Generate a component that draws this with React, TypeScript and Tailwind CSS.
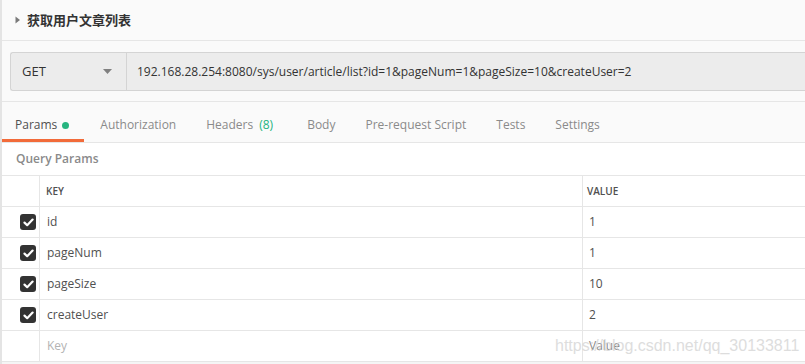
import React from "react";

const rows = [
  { k: "id", v: "1" },
  { k: "pageNum", v: "1" },
  { k: "pageSize", v: "10" },
  { k: "createUser", v: "2" },
];

function Check() {
  return (
    <div className="w-4 h-4 rounded-[3px] bg-[#333333] flex items-center justify-center">
      <svg width="11" height="9" viewBox="0 0 11 9">
        <path d="M1.5 4.6 L4.2 7.2 L9.6 1.6" stroke="#ffffff" strokeWidth="2.2" fill="none" strokeLinecap="round" strokeLinejoin="round" />
      </svg>
    </div>
  );
}

export default function App() {
  const tabs = ["Authorization", "Headers", "Body", "Pre-request Script", "Tests", "Settings"];
  return (
    <div
      className="relative w-[805px] h-[364px] overflow-hidden bg-[#f5f5f5] border-l-2 border-[#e4e4e4] flex flex-col text-[12px] text-[#505050]"
      style={{ fontFamily: '"Open Sans", "Noto Sans CJK SC", sans-serif' }}
    >
      {/* header */}
      <div className="h-[41px] shrink-0 bg-[#fafafa] border-b border-[#e6e6e6] flex items-center pl-[13px]">
        <svg width="6" height="8" viewBox="0 0 6 8" className="mr-[6px]">
          <path d="M0.5 0.5 L5 4 L0.5 7.5 Z" fill="#7a7a7a" />
        </svg>
        <span className="text-[13px] font-semibold text-[#333333]" style={{ fontFamily: '"Noto Sans CJK SC", sans-serif' }}>
          获取用户文章列表
        </span>
      </div>
      {/* url bar */}
      <div className="h-[60px] shrink-0 bg-[#fafafa] pt-[11px] pl-[8px]">
        <div className="h-[39px] flex bg-[#ececec] border border-r-0 border-[#d4d4d4] rounded-l-[3px]">
          <div className="w-[116px] shrink-0 flex items-center justify-between pl-[11px] pr-[14px] border-r border-[#d4d4d4]">
            <span className="text-[13px] text-[#333333]">GET</span>
            <svg width="9" height="5" viewBox="0 0 9 5">
              <path d="M0 0 L9 0 L4.5 5 Z" fill="#808080" />
            </svg>
          </div>
          <div className="flex items-center pl-[10px] text-[12px] text-[#333333] whitespace-nowrap">
            192.168.28.254:8080/sys/user/article/list?id=1&amp;pageNum=1&amp;pageSize=10&amp;createUser=2
          </div>
        </div>
      </div>
      {/* tabs */}
      <div className="h-[42px] shrink-0 bg-[#fafafa] border-t border-b border-[#e6e6e6] flex items-stretch pl-[13px] pt-[6px] text-[12px] text-[#8a8a8a]">
        <div className="relative flex items-center gap-[5px] pr-[31px]">
          <span className="text-[#505050]">Params</span>
          <span className="w-[7px] h-[7px] rounded-full bg-[#26b47f]" />
          <div className="absolute left-[-13px] right-[16px] bottom-[0px] h-[3px] bg-[#f26b3a]" />
        </div>
        {tabs.map((t) =>
          t === "Headers" ? (
            <div key={t} className="flex items-center pr-[34px]">
              <span>
                Headers<span className="ml-[6px] text-[#26b47f]">(8)</span>
              </span>
            </div>
          ) : (
            <div key={t} className="flex items-center pr-[30px]">
              {t}
            </div>
          )
        )}
      </div>
      {/* query params */}
      <div className="h-[32px] shrink-0 bg-white flex items-center pl-[14px] text-[12px] font-semibold text-[#8a8a8a]">
        Query Params
      </div>
      {/* table */}
      <div className="bg-white border-t border-[#e6e6e6]">
        <div className="h-[31px] flex border-b border-[#e6e6e6]">
          <div className="w-[38px] shrink-0 border-r border-[#e6e6e6]" />
          <div className="w-[543px] shrink-0 border-r border-[#e6e6e6] flex items-center pl-[6px] text-[10px] font-semibold text-[#505050]">
            KEY
          </div>
          <div className="flex-1 flex items-center pl-[4px] text-[10px] font-semibold text-[#505050]">VALUE</div>
        </div>
        {rows.map((r) => (
          <div key={r.k} className="h-[31px] flex border-b border-[#e6e6e6]">
            <div className="w-[38px] shrink-0 border-r border-[#e6e6e6] flex items-center justify-end pr-[3px]">
              <Check />
            </div>
            <div className="w-[543px] shrink-0 border-r border-[#e6e6e6] flex items-center pl-[7px] text-[#505050]">{r.k}</div>
            <div className="flex-1 flex items-center pl-[6px] text-[#505050]">{r.v}</div>
          </div>
        ))}
        <div className="h-[31px] flex border-b border-[#e6e6e6]">
          <div className="w-[38px] shrink-0 border-r border-[#e6e6e6]" />
          <div className="w-[543px] shrink-0 border-r border-[#e6e6e6] flex items-center pl-[7px] text-[#b3b3b3]">Key</div>
          <div className="flex-1 flex items-center pl-[6px] text-[#8a8a8a]">Value</div>
        </div>
      </div>
      {/* watermark */}
      <div
        className="absolute left-[553px] top-[334px] text-[16px] text-[#d0d0d0] opacity-70 whitespace-nowrap"
        style={{ fontFamily: '"Liberation Sans", Arial, sans-serif' }}
      >
        https://blog.csdn.net/qq_30133811
      </div>
    </div>
  );
}
